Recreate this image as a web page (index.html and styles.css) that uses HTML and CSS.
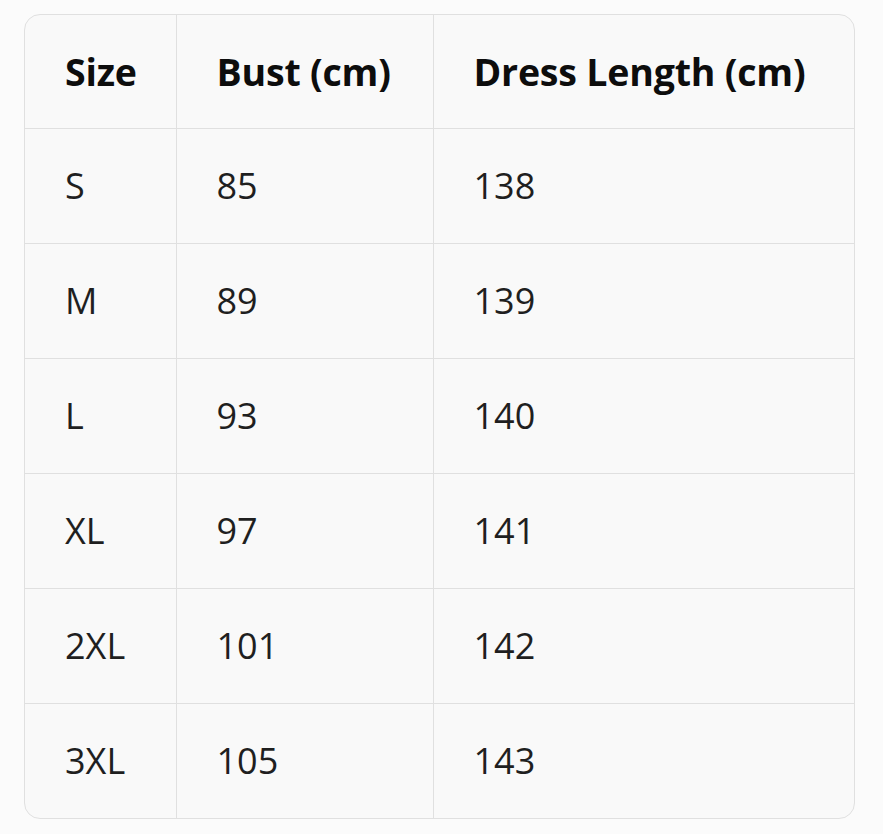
FILE: index.html
```html
<!DOCTYPE html>
<html>
<head>
<meta charset="utf-8">
<link rel="stylesheet" href="styles.css">
</head>
<body>
<div class="wrap">
<table class="sizes">
<thead>
<tr><th class="c1">Size</th><th class="c2">Bust (cm)</th><th class="c3">Dress Length (cm)</th></tr>
</thead>
<tbody>
<tr><td>S</td><td>85</td><td>138</td></tr>
<tr><td>M</td><td>89</td><td>139</td></tr>
<tr><td>L</td><td>93</td><td>140</td></tr>
<tr><td>XL</td><td>97</td><td>141</td></tr>
<tr><td>2XL</td><td>101</td><td>142</td></tr>
<tr><td>3XL</td><td>105</td><td>143</td></tr>
</tbody>
</table>
</div>
</body>
</html>
```
FILE: styles.css
```css
html, body {
  margin: 0;
  padding: 0;
  background: #fbfbfb;
}
body {
  padding: 14px 0 0 24px;
  font-family: "Open Sans", "Noto Sans", sans-serif;
  color: #0d0d0d;
}
.wrap {
  width: 829px;
  border: 1px solid #e0e0e0;
  border-radius: 16px;
  overflow: hidden;
  background: #f9f9f9;
}
.sizes {
  width: 100%;
  border-collapse: collapse;
  table-layout: fixed;
}
.sizes th, .sizes td {
  border: 1px solid #e0e0e0;
  text-align: left;
  padding: 0 0 0 40px;
  height: 115px;
  font-size: 36px;
  vertical-align: middle;
  box-sizing: border-box;
}
.sizes th {
  font-weight: 700;
  font-size: 37.5px;
  height: 113px;
  letter-spacing: -0.2px;
}
.sizes td {
  font-weight: 400;
  color: #1f1f1f;
}
.sizes thead tr th { border-top: none; }
.sizes tbody tr:last-child td { border-bottom: none; }
.sizes th:first-child, .sizes td:first-child { border-left: none; }
.sizes th:last-child, .sizes td:last-child { border-right: none; }
.c1 { width: 151px; }
.c2 { width: 257px; }
.c3 { width: auto; }
```
